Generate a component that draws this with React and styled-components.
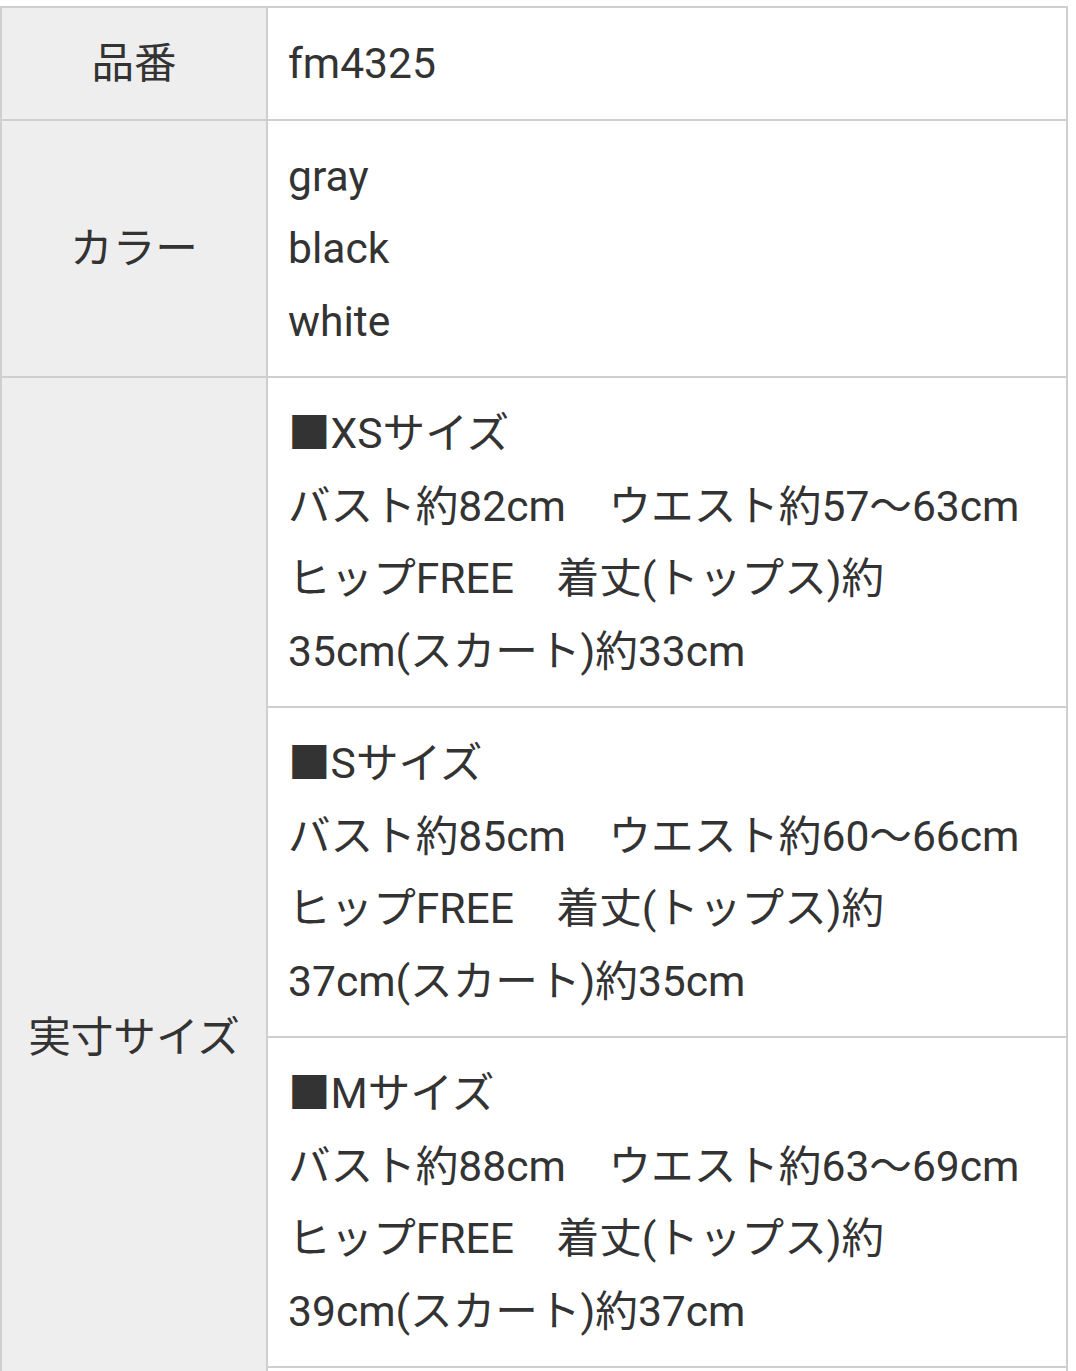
import React from "react";
import styled, { createGlobalStyle } from "styled-components";

const Global = createGlobalStyle`
  html, body { margin: 0; padding: 0; background: #ffffff; }
  body {
    font-family: Roboto, "Noto Sans CJK JP", "Noto Sans", sans-serif;
    color: #333333;
  }
`;

const Page = styled.div`
  padding: 6px 8px 0 0;
  overflow: hidden;
`;

const SpecTable = styled.table`
  width: 1068px;
  border-collapse: collapse;
  table-layout: fixed;
  font-size: 42.6px;
  line-height: 72.5px;
  color: #333333;
`;

const Label = styled.th`
  width: 224px;
  background: #eeeeee;
  border: 2.5px solid #cfcfcf;
  font-weight: 400;
  text-align: center;
  vertical-align: middle;
  padding: 19px 20px;
  white-space: nowrap;
`;

const Value = styled.td`
  background: #ffffff;
  border: 2.5px solid #cfcfcf;
  text-align: left;
  vertical-align: top;
  padding: 19px 20px;
`;

const Line = styled.div`
  white-space: nowrap;
`;

const sizes = [
  {
    name: "XS",
    lines: [
      "バスト約82cm　ウエスト約57〜63cm",
      "ヒップFREE　着丈(トップス)約",
      "35cm(スカート)約33cm",
    ],
  },
  {
    name: "S",
    lines: [
      "バスト約85cm　ウエスト約60〜66cm",
      "ヒップFREE　着丈(トップス)約",
      "37cm(スカート)約35cm",
    ],
  },
  {
    name: "M",
    lines: [
      "バスト約88cm　ウエスト約63〜69cm",
      "ヒップFREE　着丈(トップス)約",
      "39cm(スカート)約37cm",
    ],
  },
  {
    name: "L",
    lines: [
      "バスト約91cm　ウエスト約66〜72cm",
      "ヒップFREE　着丈(トップス)約",
      "41cm(スカート)約39cm",
    ],
  },
];

export default function App() {
  return (
    <Page>
      <Global />
      <SpecTable>
        <tbody>
          <tr>
            <Label>品番</Label>
            <Value>
              <Line>fm4325</Line>
            </Value>
          </tr>
          <tr>
            <Label>カラー</Label>
            <Value>
              <Line>gray</Line>
              <Line>black</Line>
              <Line>white</Line>
            </Value>
          </tr>
          {sizes.map((s, i) => (
            <tr key={s.name}>
              {i === 0 && <Label rowSpan={sizes.length}>実寸サイズ</Label>}
              <Value>
                <Line>■{s.name}サイズ</Line>
                {s.lines.map((l) => (
                  <Line key={l}>{l}</Line>
                ))}
              </Value>
            </tr>
          ))}
        </tbody>
      </SpecTable>
    </Page>
  );
}
